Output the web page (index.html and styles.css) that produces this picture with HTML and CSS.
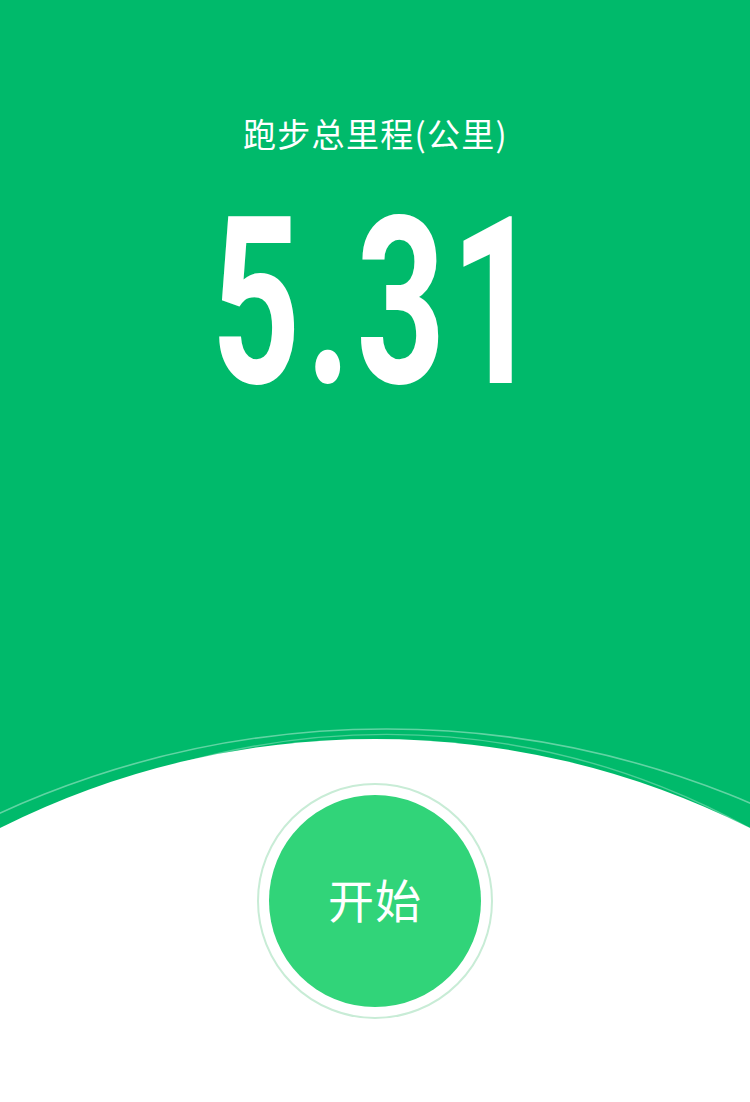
FILE: index.html
```html
<!DOCTYPE html>
<html lang="zh-CN">
<head>
<meta charset="utf-8">
<title>跑步</title>
<link rel="stylesheet" href="styles.css">
</head>
<body>
<main class="page">
  <section class="hero">
    <div class="label">跑步总里程(公里)</div>
    <div class="distance"><span class="distance-num">5.31</span></div>
  </section>
  <section class="panel">
    <svg class="wave" width="750" height="112" viewBox="0 0 750 112" aria-hidden="true">
      <rect x="0" y="0" width="750" height="112" fill="#00BA6B"/>
      <circle cx="386.4" cy="939" r="930" fill="none" stroke="rgba(255,255,255,0.38)" stroke-width="1.6"/>
      <circle cx="386.8" cy="761.6" r="747.2" fill="none" stroke="rgba(255,255,255,0.3)" stroke-width="1.4"/>
      <path d="M0,108 A834.5,834.5 0 0 1 750,108 V112 H0 Z" fill="#ffffff"/>
    </svg>
    <div class="btn-wrap">
      <button class="start-ring" type="button">
        <span class="start-btn">开始</span>
      </button>
    </div>
  </section>
</main>
</body>
</html>
```
FILE: styles.css
```css
html, body {
  margin: 0;
  padding: 0;
  background: #ffffff;
}

.page {
  width: 750px;
  height: 1102px;
  overflow: hidden;
  display: flex;
  flex-direction: column;
  font-family: "Noto Sans CJK SC", "Noto Sans", sans-serif;
}

.hero {
  height: 720px;
  background: #00BA6B;
  display: flex;
  flex-direction: column;
  align-items: center;
  padding-top: 116px;
  box-sizing: border-box;
  color: #ffffff;
}

.label {
  font-size: 33px;
  line-height: 34px;
  height: 34px;
  letter-spacing: 1.3px;
  margin-left: 1px;
}

.distance {
  margin-top: 36px;
  height: 234px;
  display: flex;
  justify-content: center;
  width: 100%;
}

.distance-num {
  font-family: Roboto, "Liberation Sans", sans-serif;
  font-weight: 700;
  font-size: 234px;
  line-height: 234px;
  letter-spacing: 8px;
  display: inline-block;
  transform: scaleX(0.665);
  transform-origin: center;
  margin-left: 6px;
}

.panel {
  position: relative;
  flex: 1;
  background: #ffffff;
  display: flex;
  flex-direction: column;
  align-items: center;
}

.wave {
  position: absolute;
  top: 0;
  left: 0;
  display: block;
}

.btn-wrap {
  position: relative;
  margin-top: 63px;
}

.start-ring {
  width: 236px;
  height: 236px;
  border-radius: 50%;
  border: 2px solid #C8ECD6;
  background: #ffffff;
  padding: 0;
  box-sizing: border-box;
  display: flex;
  align-items: center;
  justify-content: center;
  cursor: pointer;
}

.start-btn {
  width: 212px;
  height: 212px;
  border-radius: 50%;
  background: #31D479;
  color: #ffffff;
  font-family: "Noto Sans CJK SC", "Noto Sans", sans-serif;
  font-size: 46px;
  line-height: 1;
  letter-spacing: 1px;
  padding-bottom: 6px;
  box-sizing: border-box;
  display: flex;
  align-items: center;
  justify-content: center;
}
```
